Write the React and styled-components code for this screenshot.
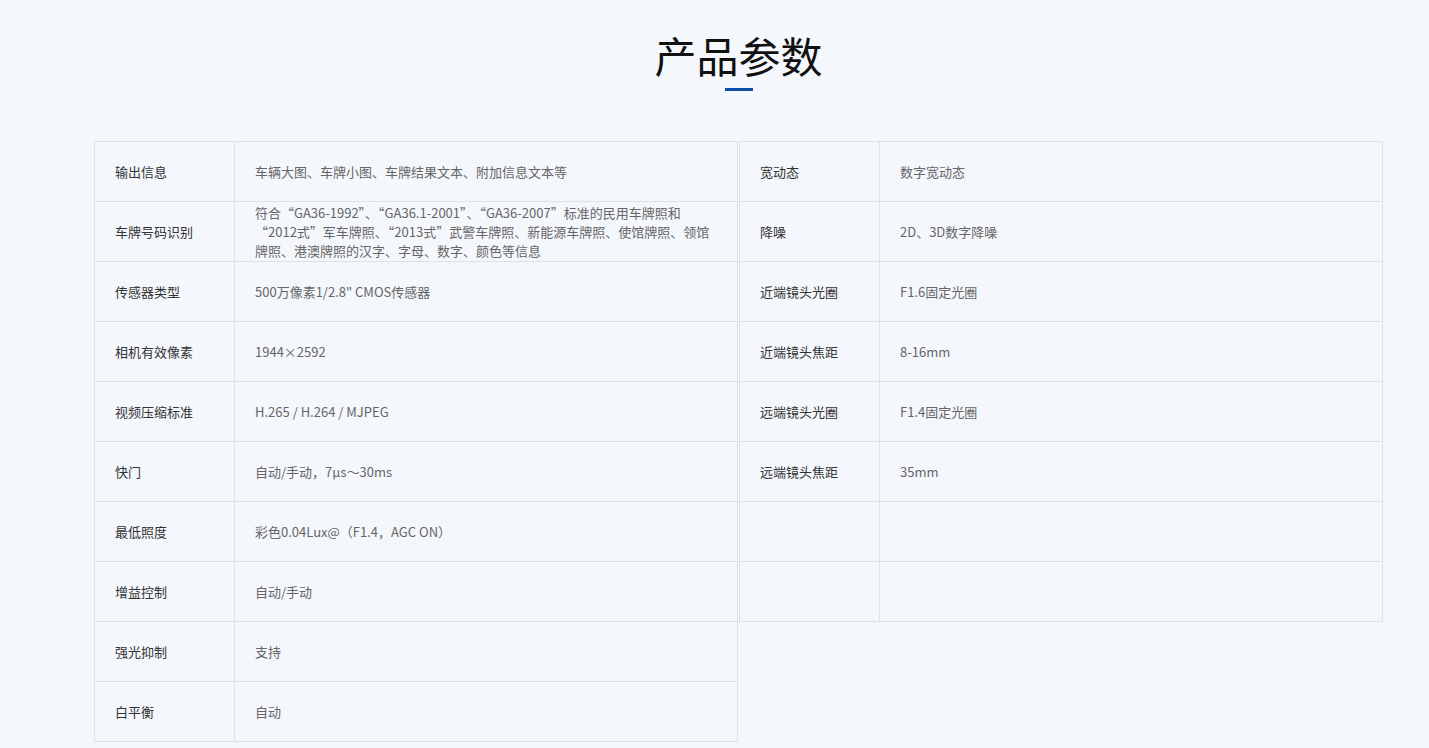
import styled, { createGlobalStyle } from 'styled-components'

const Global = createGlobalStyle`
  body { margin: 0; background: #f4f7fc; font-family: "Microsoft YaHei", "Noto Sans CJK SC", "Noto Sans", sans-serif; }
`

const Page = styled.div`
  padding: 26px 0 0 94px;
  min-height: 748px;
  box-sizing: border-box;
`

const Title = styled.h2`
  margin: 0;
  width: 1289px;
  text-align: center;
  font-size: 42px;
  font-weight: 400;
  line-height: 58px;
  color: #111;
`

const Bar = styled.div`
  width: 28px;
  height: 3px;
  background: #0a4fa8;
  margin: 4px 0 0 631px;
`

const Tables = styled.div`
  display: flex;
  align-items: flex-start;
  margin-top: 50px;
  gap: 1px;
`

const Table = styled.div`
  width: 644px;
  border: 1px solid #dde2ea;
  border-bottom: none;
  box-sizing: border-box;
`

const Row = styled.div`
  display: grid;
  grid-template-columns: 140px 1fr;
  height: 60px;
  border-bottom: 1px solid #dde2ea;
  box-sizing: border-box;
`

const Cell = styled.div`
  display: flex;
  align-items: center;
  padding: 0 20px;
  font-size: 13px;
  line-height: 19px;
  color: ${p => (p.$label ? '#333' : '#666')};
  ${p => p.$label && 'border-right: 1px solid #dde2ea;'}
`

const left = [
  ['输出信息', '车辆大图、车牌小图、车牌结果文本、附加信息文本等'],
  ['车牌号码识别', '符合“GA36-1992”、“GA36.1-2001”、“GA36-2007”标准的民用车牌照和 “2012式”军车牌照、“2013式”武警车牌照、新能源车牌照、使馆牌照、领馆牌照、港澳牌照的汉字、字母、数字、颜色等信息'],
  ['传感器类型', '500万像素1/2.8" CMOS传感器'],
  ['相机有效像素', '1944×2592'],
  ['视频压缩标准', 'H.265 / H.264 / MJPEG'],
  ['快门', '自动/手动，7μs～30ms'],
  ['最低照度', '彩色0.04Lux@（F1.4，AGC ON）'],
  ['增益控制', '自动/手动'],
  ['强光抑制', '支持'],
  ['白平衡', '自动'],
]

const right = [
  ['宽动态', '数字宽动态'],
  ['降噪', '2D、3D数字降噪'],
  ['近端镜头光圈', 'F1.6固定光圈'],
  ['近端镜头焦距', '8-16mm'],
  ['远端镜头光圈', 'F1.4固定光圈'],
  ['远端镜头焦距', '35mm'],
  ['', ''],
  ['', ''],
]

function SpecTable({ rows }) {
  return (
    <Table>
      {rows.map(([k, v], i) => (
        <Row key={i}>
          <Cell $label>{k}</Cell>
          <Cell>{v}</Cell>
        </Row>
      ))}
    </Table>
  )
}

export default function App() {
  return (
    <Page>
      <Global />
      <Title>产品参数</Title>
      <Bar />
      <Tables>
        <SpecTable rows={left} />
        <SpecTable rows={right} />
      </Tables>
    </Page>
  )
}
